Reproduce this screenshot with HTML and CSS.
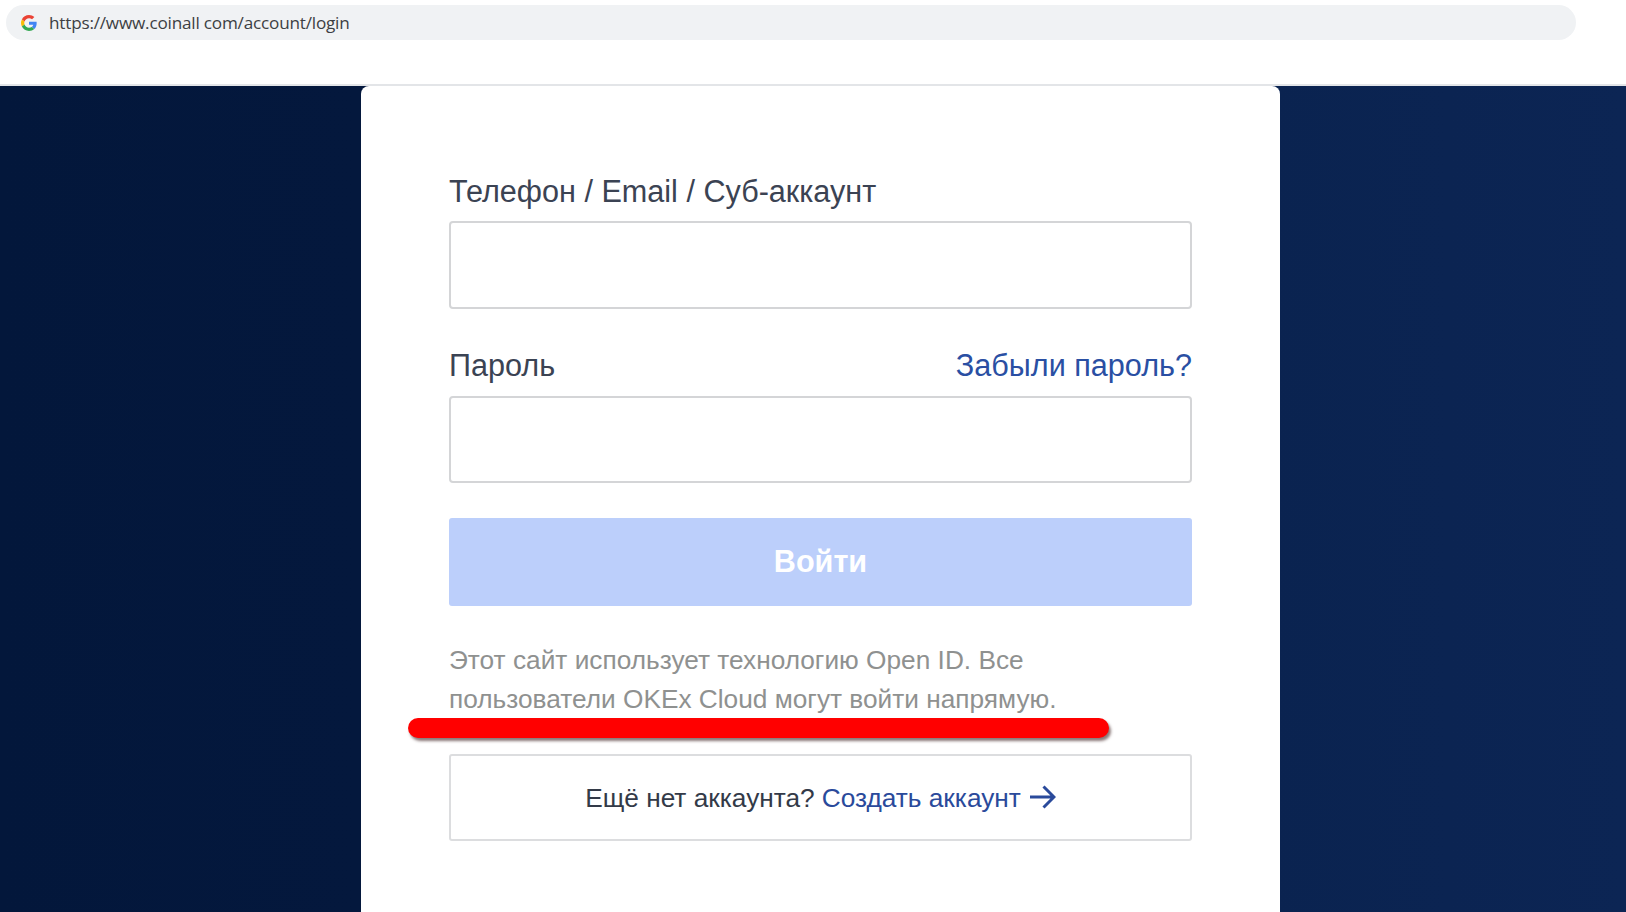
FILE: index.html
```html
<!DOCTYPE html>
<html lang="ru">
<head>
<meta charset="utf-8">
<title>Login</title>
<link rel="stylesheet" href="styles.css">
</head>
<body>
<header class="browser">
  <div class="address">
    <svg class="g-logo" viewBox="0 0 48 48" width="16" height="16" aria-hidden="true">
      <path fill="#EA4335" d="M24 9.5c3.5 0 6.700 1.200 9.200 3.600l6.900-6.900C35.900 2.400 30.500 0 24 0 14.600 0 6.500 5.400 2.600 13.200l8 6.200C12.500 13.700 17.800 9.500 24 9.500z"/>
      <path fill="#4285F4" d="M47 24.500c0-1.600-.1-3.100-.4-4.500H24v9h12.900c-.6 3-2.200 5.500-4.700 7.200l7.700 6C44.400 38 47 31.800 47 24.500z"/>
      <path fill="#FBBC05" d="M10.600 28.600c-.5-1.400-.8-3-.8-4.600s.3-3.200.8-4.600l-8-6.200C.9 16.500 0 20.100 0 24s.9 7.500 2.600 10.800l8-6.200z"/>
      <path fill="#34A853" d="M24 48c6.500 0 11.900-2.100 15.900-5.800l-7.700-6c-2.200 1.400-4.900 2.300-8.200 2.300-6.200 0-11.500-4.200-13.400-9.900l-8 6.200C6.500 42.600 14.600 48 24 48z"/>
    </svg>
    <span class="url">https://www.coinall com/account/login</span>
  </div>
</header>
<main class="stage">
  <section class="card">
    <form class="form">
      <div class="field-head first"><label class="label">Телефон / Email / Суб-аккаунт</label></div>
      <div class="input"></div>
      <div class="field-head second"><label class="label">Пароль</label><a class="link">Забыли пароль?</a></div>
      <div class="input short"></div>
      <div class="submit">Войти</div>
      <p class="note">Этот сайт использует технологию Open ID. Все<br>пользователи OKEx Cloud могут войти напрямую.</p>
      <div class="signup">
        <span class="signup-q">Ещё нет аккаунта?</span>
        <a class="signup-link">Создать аккаунт</a>
        <svg class="arrow" viewBox="0 0 26 24" width="26" height="24" aria-hidden="true"><path d="M0 12H24M13.500 1.500L24 12L13.500 22.500" fill="none" stroke="#2a4a9b" stroke-width="3"/></svg>
      </div>
      <div class="marker"></div>
    </form>
  </section>
</main>
</body>
</html>
```
FILE: styles.css
```css
* { box-sizing: border-box; }
html, body { margin: 0; height: 100%; }
body {
  width: 1626px;
  height: 912px;
  overflow: hidden;
  background: #fff;
  font-family: "Liberation Sans", Arial, sans-serif;
  display: flex;
  flex-direction: column;
}
.browser {
  height: 86px;
  flex: none;
  padding: 5px 50px 0 6px;
  border-bottom: 2px solid #e3e5e8;
}
.address {
  height: 35px;
  border-radius: 18px;
  background: #f0f2f4;
  display: flex;
  align-items: center;
  padding-left: 15px;
  gap: 12px;
}
.g-logo { flex: none; }
.url {
  font-size: 17.150px;
  font-family: "Open Sans", "Liberation Sans", sans-serif;
  color: #3c4043;
  letter-spacing: -0.200px;
}
.stage {
  flex: 1;
  min-height: 0;
  background: linear-gradient(90deg, #03173b 0%, #04183d 22%, #0a2350 78%, #0c2554 100%);
  padding-left: 361px;
}
.card {
  width: 919px;
  height: 100%;
  background: #fff;
  border-radius: 8px 8px 0 0;
  padding: 83px 88px 0;
}
.form { position: relative; height: 100%; }
.field-head {
  display: flex;
  justify-content: space-between;
  align-items: center;
  height: 44px;
  margin-bottom: 8px;
}
.field-head.second { margin-top: 34px; margin-bottom: 9px; }
.label { font-size: 30.600px; color: #3b4353; }
.link { font-size: 30.600px; color: #2a4fa3; }
.input {
  height: 88px;
  background: #fff;
  border: 2px solid #d4d5d7;
  border-radius: 4px;
}
.input.short { height: 87px; }
.submit {
  height: 88px;
  margin-top: 35px;
  padding-bottom: 1px;
  background: #bccffb;
  border-radius: 3px;
  color: #fff;
  font-size: 30.600px;
  font-weight: 700;
  display: flex;
  align-items: center;
  justify-content: center;
}
.note {
  margin: 35px 0 0;
  font-size: 26.250px;
  line-height: 39px;
  color: #8f9190;
}
.signup {
  height: 87px;
  margin-top: 35px;
  border: 2px solid #dcdddf;
  border-radius: 3px;
  display: flex;
  align-items: center;
  justify-content: center;
  gap: 7px;
  font-size: 26.250px;
}
.signup-q { color: #333a48; padding-top: 1px; }
.signup-link { color: #2a4a9b; padding-top: 1px; }
.arrow { margin-left: 2px; margin-top: -1px; }
.marker {
  position: absolute;
  left: -41px;
  top: 549px;
  width: 701px;
  height: 20px;
  border-radius: 10px;
  background: #ff0000;
  box-shadow: 2px 3px 3px rgba(60, 30, 30, 0.6);
}
```
